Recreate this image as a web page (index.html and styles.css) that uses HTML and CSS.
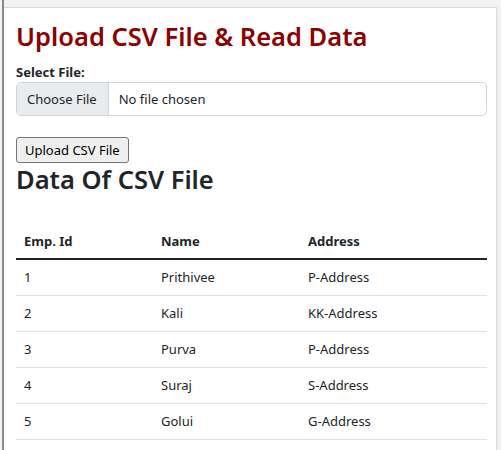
FILE: index.html
```html
<!DOCTYPE html>
<html lang="en">
<head>
    <meta charset="UTF-8">
    <meta name="viewport" content="width=device-width, initial-scale=1.0">
    <title>Upload CSV File &amp; Read Data</title>
    <link rel="stylesheet" href="styles.css">
</head>
<body>
    <div class="frame">
        <div class="container">
            <h2 class="title">Upload CSV File &amp; Read Data</h2>
            <form class="upload-form">
                <label class="form-label">Select File:</label>
                <label class="file-input">
                    <span class="file-btn">Choose File</span>
                    <span class="file-name">No file chosen</span>
                </label>
                <button type="button" class="upload-btn">Upload CSV File</button>
            </form>
            <h2 class="data-title">Data Of CSV File</h2>
            <table class="table">
                <thead>
                    <tr>
                        <th class="col-id">Emp. Id</th>
                        <th class="col-name">Name</th>
                        <th>Address</th>
                    </tr>
                </thead>
                <tbody>
                    <tr><td>1</td><td>Prithivee</td><td>P-Address</td></tr>
                    <tr><td>2</td><td>Kali</td><td>KK-Address</td></tr>
                    <tr><td>3</td><td>Purva</td><td>P-Address</td></tr>
                    <tr><td>4</td><td>Suraj</td><td>S-Address</td></tr>
                    <tr><td>5</td><td>Golui</td><td>G-Address</td></tr>
                </tbody>
            </table>
        </div>
    </div>
</body>
</html>
```

FILE: styles.css
```css
body {
    font-family: "Segoe UI", "Noto Sans", Arial, sans-serif;
    font-size: 13px;
    color: #212529;
    margin: 0;
    padding: 0;
    background-color: #f3f3f3;
    border-left: 2px solid #8a8a8a;
    margin-left: 2px;
    height: 450px;
    overflow: hidden;
}

.frame {
    margin-top: 7px;
    margin-right: 4px;
    background-color: #fff;
    border-top: 1px solid #dcdcdc;
    border-right: 1px solid #dcdcdc;
    height: 100%;
    box-shadow: 0 2px 6px rgba(0, 0, 0, 0.06);
}

.container {
    padding: 0 9px 0 12px;
}

h2 {
    font-size: 25.5px;
    font-weight: 600;
    line-height: 31px;
    margin: 0;
}

.title {
    color: darkred;
    padding-top: 13px;
    margin-bottom: 11px;
}

.form-label {
    display: block;
    font-weight: bold;
    margin-bottom: 1px;
}

.file-input {
    display: flex;
    height: 34px;
    border: 1px solid #ced4da;
    border-radius: 5px;
    overflow: hidden;
    box-sizing: border-box;
}

.file-btn {
    display: flex;
    align-items: center;
    padding: 0 11px 0 10px;
    background-color: #e9ecef;
    border-right: 1px solid #ced4da;
}

.file-name {
    display: flex;
    align-items: center;
    padding: 0 10px;
}

.upload-btn {
    display: block;
    margin-top: 21px;
    font-family: inherit;
    font-size: 13px;
    color: #000;
    background-color: #efefef;
    border: 1px solid #767676;
    border-radius: 3px;
    padding: 1px 8px;
    height: 26px;
}

.data-title {
    margin-top: 1px;
}

.table {
    width: 100%;
    margin-top: 29px;
    border-collapse: collapse;
}

.table th {
    text-align: left;
    font-weight: bold;
    line-height: 21px;
    padding: 7px 8px 6px;
    border-bottom: 2px solid #212529;
}

.table .col-id {
    width: 121px;
}

.table .col-name {
    width: 131px;
}

.table td {
    line-height: 21px;
    padding: 7px 8px;
    border-bottom: 1px solid #dee2e6;
}
```
